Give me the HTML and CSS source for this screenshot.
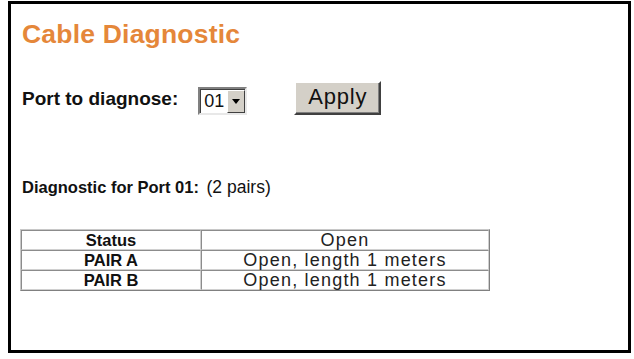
FILE: index.html
```html
<!DOCTYPE html>
<html>
<head>
<meta charset="utf-8">
<link rel="stylesheet" href="styles.css">
</head>
<body>
<div class="frame">
  <h1 class="title">Cable Diagnostic</h1>
  <div class="port-row">
    <span class="label">Port to diagnose:</span>
    <div class="select">
      <span class="select-value">01</span>
      <span class="select-btn"><span class="tri"></span></span>
    </div>
    <button class="apply">Apply</button>
  </div>
  <div class="diag">
    <span class="diag-label">Diagnostic for Port 01:</span>
    <span class="diag-pairs">(2 pairs)</span>
  </div>
  <table class="result">
    <tr><th>Status</th><td>Open</td></tr>
    <tr><th>PAIR A</th><td>Open, length 1 meters</td></tr>
    <tr><th>PAIR B</th><td>Open, length 1 meters</td></tr>
  </table>
</div>
</body>
</html>
```

FILE: styles.css
```css
html, body {
  margin: 0;
  padding: 0;
  background: #fff;
}
body {
  font-family: "Liberation Sans", Arial, sans-serif;
  color: #111;
}
.frame {
  box-sizing: border-box;
  margin: 1px 0 0 8px;
  width: 623px;
  height: 352px;
  border: 3px solid #000;
  padding: 0 0 0 11px;
}
.title {
  margin: 0;
  padding-top: 15px;
  font-size: 26.5px;
  font-weight: bold;
  line-height: 30px;
  letter-spacing: 0.2px;
  color: #e5873a;
}
.port-row {
  display: flex;
  align-items: center;
  margin-top: 32px;
  height: 34px;
}
.label {
  font-size: 19px;
  font-weight: bold;
  margin-right: 20px;
  position: relative;
  top: 1px;
}
.select {
  display: flex;
  box-sizing: border-box;
  width: 49px;
  height: 28px;
  margin-top: 5px;
  border: 2px solid;
  border-color: #808080 #e8e8e8 #e8e8e8 #808080;
  box-shadow: inset 1px 1px 0 #404040;
  background: #fff;
}
.select-value {
  flex: 1;
  font-size: 18px;
  line-height: 24px;
  padding-left: 4px;
}
.select-btn {
  box-sizing: border-box;
  width: 18px;
  margin: 1px 0 0 0;
  background: #d4d0c8;
  border: 1px solid;
  border-color: #fff #404040 #404040 #fff;
  display: flex;
  align-items: center;
  justify-content: center;
}
.tri {
  width: 0;
  height: 0;
  border-left: 4.5px solid transparent;
  border-right: 4.5px solid transparent;
  border-top: 5px solid #000;
}
.apply {
  margin-left: 47px;
  box-sizing: border-box;
  width: 87px;
  height: 34px;
  font-family: "Liberation Sans", Arial, sans-serif;
  font-size: 22px;
  letter-spacing: 0.8px;
  color: #111;
  background: #d4d0c8;
  border: 2px solid;
  border-color: #fff #404040 #404040 #fff;
  box-shadow: inset -1px -1px 0 #808080;
  padding: 0 0 2px 0;
}
.diag {
  margin-top: 62px;
  font-size: 16.5px;
}
.diag-label {
  font-weight: bold;
  margin-right: 3px;
}
.diag-pairs {
  font-size: 17.5px;
}
.result {
  margin: 31px 0 0 -2px;
  width: 470px;
  border-collapse: separate;
  border-spacing: 0;
  border: 1px solid;
  border-color: #c8c8c8 #808080 #808080 #c8c8c8;
  font-size: 16.5px;
}
.result th, .result td {
  height: 18px;
  padding: 0;
  border: 1px solid;
  border-color: #8c8c8c #d0d0d0 #d0d0d0 #8c8c8c;
  text-align: center;
  line-height: 18px;
}
.result th {
  width: 178px;
  font-weight: bold;
}
.result td {
  font-weight: normal;
  font-size: 18px;
  letter-spacing: 1.2px;
  color: #222;
}
```
